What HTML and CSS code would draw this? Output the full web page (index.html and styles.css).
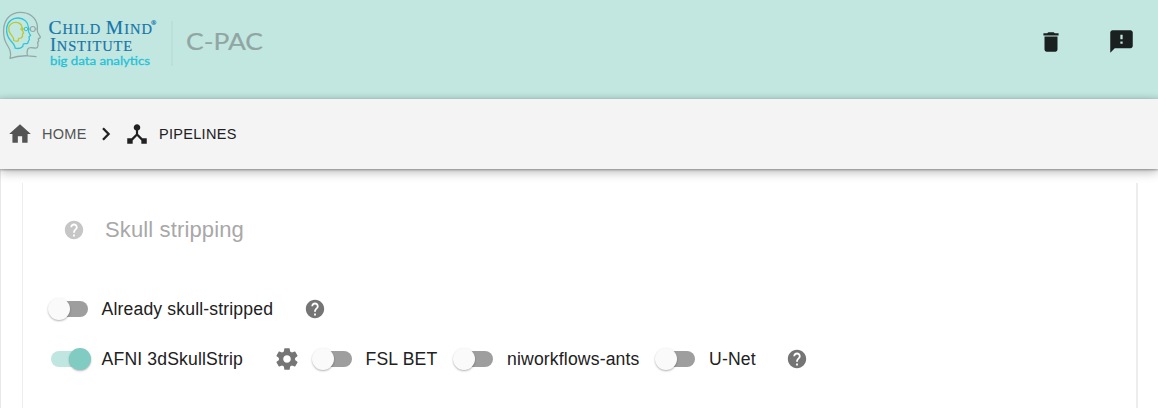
FILE: index.html
```html
<!DOCTYPE html>
<html lang="en">
<head>
<meta charset="utf-8">
<title>C-PAC</title>
<link rel="stylesheet" href="styles.css">
</head>
<body>
<svg class="defs" width="0" height="0" aria-hidden="true">
  <symbol id="help" viewBox="0 0 24 24"><path d="M12 2C6.48 2 2 6.48 2 12s4.480 10 10 10 10-4.480 10-10S17.520 2 12 2zm1 17h-2v-2h2v2zm2.070-7.750l-.9.920C13.450 12.900 13 13.500 13 15h-2v-.5c0-1.100.450-2.100 1.170-2.830l1.240-1.260c.370-.360.590-.860.590-1.410 0-1.100-.9-2-2-2s-2 .9-2 2H8c0-2.210 1.790-4 4-4s4 1.790 4 4c0 .880-.360 1.680-.930 2.250z"/></symbol>
</svg>
<header class="appbar">
  <svg class="logo" width="270" height="80" viewBox="0 0 270 80">
    <g fill="none" stroke-linecap="round" stroke-linejoin="round">
      <path stroke="#93a9a7" stroke-width="1.300" d="M10 58.300C11.500 54 10.500 50 7.500 45.500C4.500 41 3.300 36 3.600 30C4 19 11 12.300 20.500 12.300C29.500 12.300 36 17.500 37.300 25.500C37.700 28.500 36.800 30.500 37.800 32.500L40.300 36.800Q40.600 38 38.300 38.700L38.700 41.200L37.600 42.500L38 44.300C38.300 47.500 37 48.300 34.500 48C31 47.400 28.500 47.200 27.800 49C27 51.500 26.500 54.500 28 55.800L36 56.600M10 58.300C15 56.500 21 55.500 28 55.800"/>
      <circle cx="32.800" cy="29" r="2.500" stroke="#93a9a7" stroke-width="1.100"/>
      <path stroke="#93a9a7" stroke-width="1.100" d="M35.500 29H37.500M30 29H29"/>
      <path stroke="#2fc4da" stroke-width="1.300" d="M15.200 48.200C15 45.500 13.500 43.500 10.500 40.500C7.500 37 6.200 33 6.700 28C7.500 21.500 12.500 17.800 18 18C24 18.200 28 22 28.500 27.500L28.600 32L30.600 35.500L29 36.700L29.400 39.500L28.200 41.500C28.300 43.500 27 43.900 25.500 43.600C23.500 43.300 22.900 44.300 22.800 46.500C20.500 48.500 18 48.900 15.200 48.200Z"/>
      <circle cx="26" cy="29" r="1.800" stroke="#2fc4da"/>
      <path stroke="#b9c936" stroke-width="1.300" d="M13.700 40.500C14.200 37.500 12.500 36.500 10.500 34C8.300 31 7.800 26.500 11 24C14 21.500 19 22 21.300 25C22.400 26.700 21.800 28.500 22.300 30L23.600 33L22.500 34L22.500 36.500L20.800 38.200L18.600 38.400L18.200 41C16.800 41.300 15 41.200 13.700 40.500Z"/>
      <circle cx="22" cy="29" r="1.200" stroke="#b9c936"/>
    </g>
    <g class="logo-serif">
      <text x="48.500" y="33.500" textLength="103.500" lengthAdjust="spacing"><tspan font-size="19.500">C</tspan><tspan font-size="14.500">HILD </tspan><tspan font-size="19.500">M</tspan><tspan font-size="14.500">IND</tspan></text>
      <text x="151" y="25" font-size="7">®</text>
      <text x="50" y="50.500" textLength="82" lengthAdjust="spacing"><tspan font-size="18">I</tspan><tspan font-size="14.500">NSTITUTE</tspan></text>
    </g>
    <text class="logo-tag" x="50" y="64.500" textLength="100" lengthAdjust="spacingAndGlyphs">big data analytics</text>
    <path d="M172 21V66" stroke="#b2d8d1"/>
    <text class="logo-name" x="186" y="50" textLength="77" lengthAdjust="spacingAndGlyphs">C-PAC</text>
  </svg>
  <div class="actions">
    <svg width="26" height="26" viewBox="0 0 24 24"><path d="M6 19c0 1.100.9 2 2 2h8c1.100 0 2-.9 2-2V7H6v12zM19 4h-3.500l-1-1h-5l-1 1H5v2h14V4z"/></svg>
    <svg width="27" height="27" viewBox="0 0 24 24"><path d="M20 2H4c-1.100 0-1.990.9-1.990 2L2 22l4-4h14c1.100 0 2-.9 2-2V4c0-1.100-.9-2-2-2zm-7 12h-2v-2h2v2zm0-4h-2V6h2v4z"/></svg>
  </div>
</header>
<nav class="crumbs">
  <svg class="home-icon" width="26" height="26" viewBox="0 0 24 24"><path d="M10 20v-6h4v6h5v-8h3L12 3 2 12h3v8z"/></svg>
  <span class="crumb home">HOME</span>
  <svg class="chevron" width="12" height="16" viewBox="0 0 12 16"><path d="M3 2.200L8.600 8L3 13.800" fill="none" stroke="#212121" stroke-width="2.300"/></svg>
  <svg class="tree-icon" width="26" height="26" viewBox="0 0 24 24"><path d="M17 16l-4-4V8.820C14.160 8.400 15 7.300 15 6c0-1.660-1.340-3-3-3S9 4.340 9 6c0 1.300.840 2.400 2 2.820V12l-4 4H3v5h5v-3.050l4-4.200 4 4.200V21h5v-5h-4z"/></svg>
  <span class="crumb current">PIPELINES</span>
</nav>
<main class="page">
  <section class="card">
    <div class="title-row">
      <svg class="help" width="22" height="22"><use href="#help"/></svg>
      <h1>Skull stripping</h1>
    </div>
    <div class="row">
      <span class="switch"></span><span class="label already">Already skull-stripped</span>
      <svg class="help" width="22" height="22"><use href="#help"/></svg>
    </div>
    <div class="row">
      <span class="switch on"></span><span class="label afni">AFNI 3dSkullStrip</span>
      <svg class="gear" width="26" height="26" viewBox="0 0 24 24"><path d="M19.430 12.980c.040-.320.070-.640.070-.980s-.030-.660-.070-.980l2.110-1.650c.190-.150.240-.420.120-.640l-2-3.460c-.120-.220-.390-.300-.610-.220l-2.490 1c-.520-.400-1.080-.730-1.690-.980l-.380-2.650C14.460 2.180 14.250 2 14 2h-4c-.250 0-.460.180-.490.420l-.380 2.650c-.610.250-1.170.590-1.690.980l-2.490-1c-.230-.090-.490 0-.610.220l-2 3.460c-.130.220-.070.490.120.640l2.110 1.650c-.040.320-.070.650-.070.980s.030.660.070.980l-2.110 1.650c-.190.150-.240.420-.120.640l2 3.460c.120.220.390.300.610.220l2.490-1c.520.400 1.080.730 1.690.980l.380 2.650c.030.240.240.420.490.420h4c.250 0 .460-.180.490-.420l.380-2.650c.610-.250 1.170-.590 1.690-.980l2.490 1c.230.090.490 0 .610-.220l2-3.460c.120-.220.070-.490-.120-.640l-2.110-1.650zM12 15.500c-1.930 0-3.500-1.570-3.500-3.500s1.570-3.500 3.500-3.500 3.500 1.570 3.500 3.500-1.570 3.500-3.500 3.500z"/></svg>
      <span class="switch"></span><span class="label fsl">FSL BET</span>
      <span class="switch"></span><span class="label ants">niworkflows-ants</span>
      <span class="switch"></span><span class="label unet">U-Net</span>
      <svg class="help" width="22" height="22"><use href="#help"/></svg>
    </div>
  </section>
</main>
</body>
</html>
```
FILE: styles.css
```css
* { box-sizing: border-box; }
body {
  margin: 0;
  height: 408px;
  overflow: hidden;
  display: flex;
  flex-direction: column;
  background: #fff;
  font-family: "Liberation Sans", Arial, sans-serif;
  color: #212121;
}
svg { display: block; flex: none; fill: currentColor; }
.defs { position: absolute; }
.appbar {
  height: 99px;
  flex: none;
  display: flex;
  justify-content: space-between;
  background: linear-gradient(#c2e7e0 93px, #b8dbd5 99px);
}
.logo-serif { font-family: "Liberation Serif", serif; fill: #1675a9; stroke: #1675a9; stroke-width: .2px; }
.logo-tag { font: 12.300px Lato, sans-serif; fill: #22c1d8; stroke: #22c1d8; stroke-width: .3px; }
.logo-name { font: 24px Lato, sans-serif; fill: #91a5a2; stroke: #91a5a2; stroke-width: .2px; }
.actions { display: flex; gap: 44px; align-items: center; height: 83px; padding-right: 23px; color: #1a201f; }
.crumbs {
  position: relative;
  height: 70px;
  flex: none;
  display: flex;
  align-items: center;
  padding-left: 7px;
  background: #f4f4f4;
  box-shadow: 0 1px 2px rgba(0,0,0,.32), 0 3px 10px rgba(0,0,0,.28);
}
.crumb { font-size: 14.500px; line-height: 20px; letter-spacing: .3px; white-space: nowrap; }
.home-icon, .home { color: #545454; }
.home { width: 45px; margin-left: 9px; }
.chevron { margin-left: 13px; }
.tree-icon { margin-left: 12px; }
.current { margin-left: 9px; }
.page { flex: 1; padding: 14px 20px 0 21px; border-left: 1px solid #e8e8e8; }
.card {
  height: 240px;
  padding-left: 25px;
  background: #fff;
  border: solid #ededed;
  border-width: 0 2px 0 1px;
}
.title-row { display: flex; align-items: center; height: 94px; padding-left: 15px; color: #c6c6c6; }
h1 { margin: 0 0 0 20px; font-size: 22px; line-height: 28px; font-weight: 400; letter-spacing: .13px; color: #a8a8a8; white-space: nowrap; }
.row { display: flex; align-items: center; height: 50px; color: #757575; }
.title-row + .row { margin-top: 7px; }
.switch { width: 43px; height: 22px; flex: none; display: grid; align-items: center; padding-left: 3px; }
.switch::before, .switch::after { content: ""; grid-area: 1 / 1; }
.switch::before { width: 37px; height: 16px; border-radius: 8px; background: #9e9e9e; }
.switch::after {
  width: 22px;
  height: 22px;
  margin-left: -3px;
  border-radius: 50%;
  background: #fafafa;
  box-shadow: 0 1px 2px rgba(0,0,0,.3);
}
.switch.on::before { background: #c0e6e1; }
.switch.on::after { margin-left: 18px; background: #80cbc2; }
.label { flex: none; margin-left: 10.600px; font-size: 17.600px; line-height: 24px; letter-spacing: .15px; color: #212121; white-space: nowrap; }
.already { width: 202.400px; }
.afni { width: 172.400px; }
.gear { margin-right: 12px; }
.fsl { width: 87.900px; }
.ants { width: 148.400px; }
.unet { width: 77px; }
```
